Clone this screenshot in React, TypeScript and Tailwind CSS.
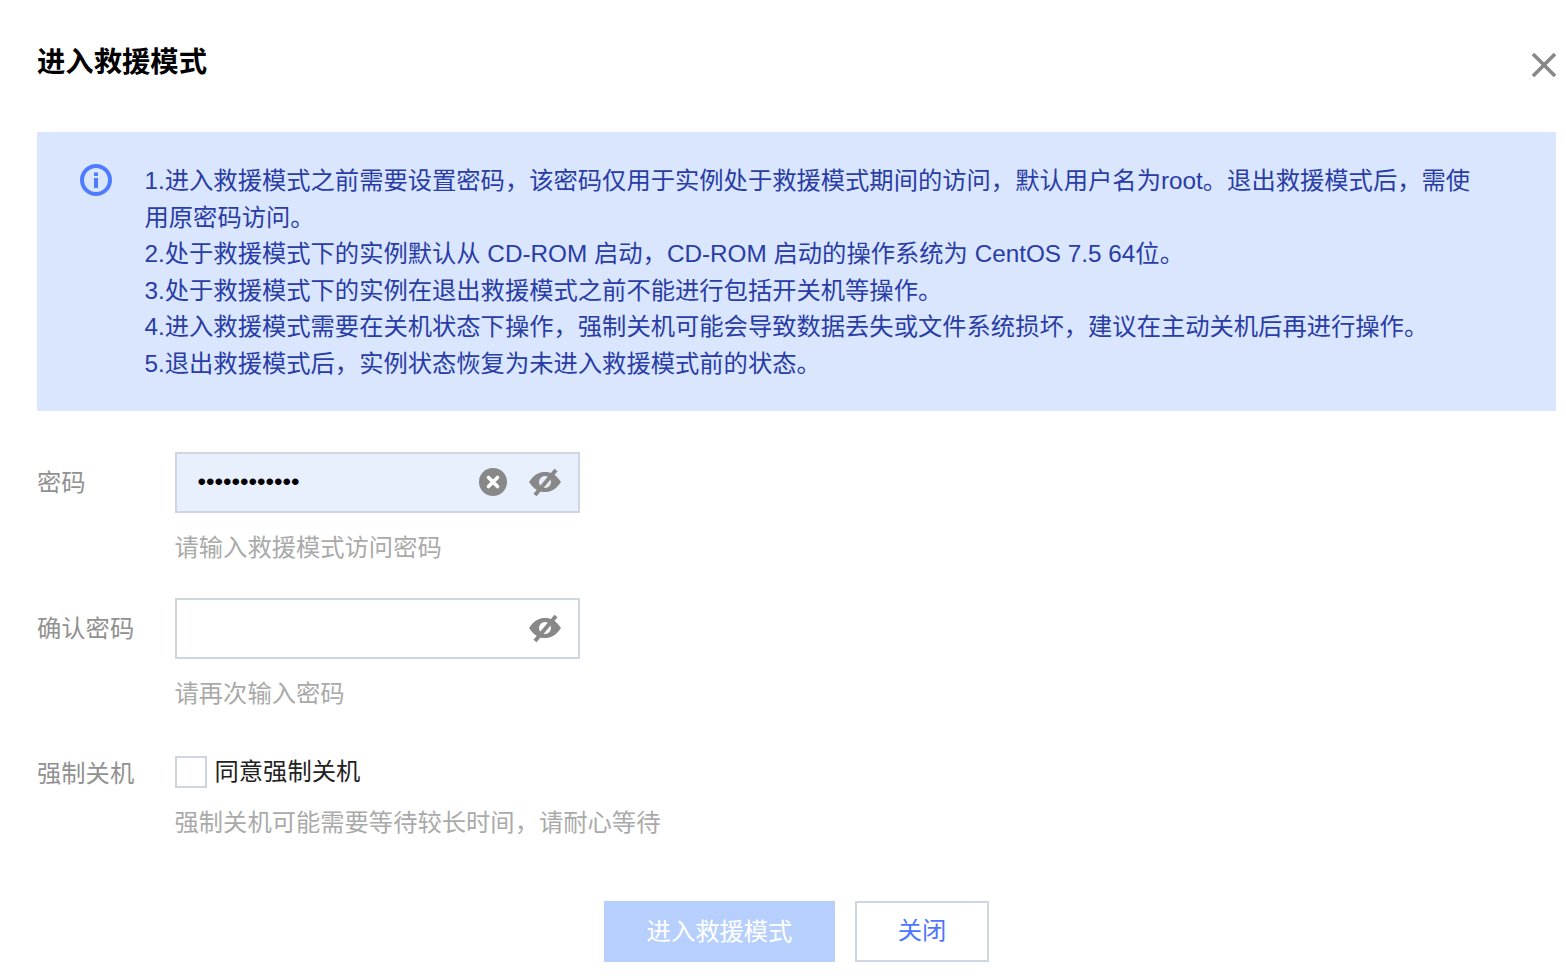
const F = "font-['Liberation_Sans','Noto_Sans_CJK_SC',sans-serif]";

function Eye() {
  return (
    <svg width="32" height="32" viewBox="0 0 32 32" className="shrink-0">
      <path
        fillRule="evenodd"
        fill="#888"
        d="M0 16C5 8.500 10 6 16 6S27 8.500 32 16C27 23.500 22 26 16 26S5 23.500 0 16ZM16 10A6 6 0 1 0 16 22A6 6 0 1 0 16 10Z"
      />
      <path d="M6 29 27 4" stroke="#888" strokeWidth="4" fill="none" />
    </svg>
  );
}

function ClearIcon() {
  return (
    <svg width="28" height="28" viewBox="0 0 28 28" className="shrink-0">
      <circle cx="14" cy="14" r="14" fill="#888" />
      <path d="M9.500 9.500l9 9M18.500 9.500l-9 9" stroke="#fff" strokeWidth="3.600" strokeLinecap="round" />
    </svg>
  );
}

function Row({ label, hint, children, className }: { label: string; hint: string; children: React.ReactNode; className: string }) {
  return (
    <div className={`flex ${className}`}>
      <div className="w-[137.5px] shrink-0 text-[#919191] h-[60.5px] leading-[61px]">{label}</div>
      <div>
        {children}
        <div className="text-[#aaa] leading-[36px] mt-[17.5px]">{hint}</div>
      </div>
    </div>
  );
}

export default function App() {
  return (
    <div className={`${F} w-[1566px] h-[980px] overflow-hidden bg-white pl-[37px] pr-[10px] text-[24.3px] relative`}>
      <div className="flex justify-between h-[132px]">
        <h1 className="text-[28.35px] font-bold text-black leading-[40px] pt-[42px]">进入救援模式</h1>
        <svg width="26" height="26" viewBox="0 0 26 26" className="mt-[52px] mr-[-1px]">
          <path d="M2 2l22 22M24 2 2 24" stroke="#888" strokeWidth="3.600" />
        </svg>
      </div>

      <div className="bg-[#d9e6fe] h-[279px] pt-[31px] pl-[43px] pr-[70px] flex gap-[32.5px] text-[#2a3da5] leading-[36.6px]">
        <svg width="32" height="32" viewBox="0 0 32 32" className="shrink-0 mt-[1px]">
          <circle cx="16" cy="16" r="14" fill="none" stroke="#4f7cff" strokeWidth="4" />
          <rect x="14" y="14" width="4" height="10" fill="#4f7cff" />
          <rect x="14" y="8.500" width="4" height="3.500" fill="#4f7cff" />
        </svg>
        <div>
          <div>1.进入救援模式之前需要设置密码，该密码仅用于实例处于救援模式期间的访问，默认用户名为root。退出救援模式后，需使用原密码访问。</div>
          <div>2.处于救援模式下的实例默认从 CD-ROM 启动，CD-ROM 启动的操作系统为 CentOS 7.5 64位。</div>
          <div>3.处于救援模式下的实例在退出救援模式之前不能进行包括开关机等操作。</div>
          <div>4.进入救援模式需要在关机状态下操作，强制关机可能会导致数据丢失或文件系统损坏，建议在主动关机后再进行操作。</div>
          <div>5.退出救援模式后，实例状态恢复为未进入救援模式前的状态。</div>
        </div>
      </div>

      <Row label="密码" hint="请输入救援模式访问密码" className="mt-[41px]">
        <div className="w-[405px] h-[60.5px] border-2 border-[#d0d5e2] bg-[#e8effd] flex items-center pl-[21px] pr-[17px]">
          <span className="flex-1 text-black leading-[30px] mt-[-1px]">••••••••••••</span>
          <span className="mt-[-1px]"><ClearIcon /></span>
          <span className="w-[22px]" />
          <Eye />
        </div>
      </Row>

      <Row label="确认密码" hint="请再次输入密码" className="mt-[32px]">
        <div className="w-[405px] h-[60.5px] border-2 border-[#d0d5e2] bg-white flex items-center justify-end pr-[17px]">
          <Eye />
        </div>
      </Row>

      <div className="flex mt-[44px]">
        <div className="w-[137.5px] shrink-0 text-[#919191] leading-[36px] h-[36px]">强制关机</div>
        <div>
          <div className="flex items-center h-[32px] gap-[8px]">
            <span className="w-[32px] h-[32px] border-2 border-[#d0d5e2] bg-white" />
            <span className="text-[#222] leading-[32px] mt-[-1px]">同意强制关机</span>
          </div>
          <div className="text-[#aaa] leading-[36px] mt-[16.5px]">强制关机可能需要等待较长时间，请耐心等待</div>
        </div>
      </div>

      <div className="flex justify-center gap-[20px] mt-[60.5px]">
        <button className="w-[231px] h-[61px] bg-[#b7cffc] text-white pt-[1px]">进入救援模式</button>
        <button className="w-[134px] h-[61px] border-2 border-[#d0d5e2] text-[#4f74ff] bg-white">关闭</button>
      </div>
    </div>
  );
}
